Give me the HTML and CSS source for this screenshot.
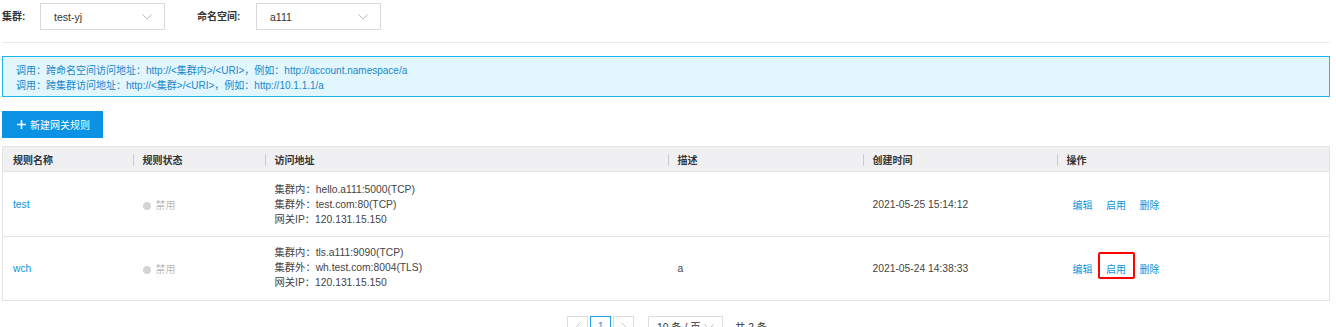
FILE: index.html
```html
<!DOCTYPE html>
<html lang="zh-CN">
<head>
<meta charset="UTF-8" />
<title>网关规则</title>
<link rel="stylesheet" href="styles.css">
</head>
<body>
<div class="page">

  <div class="filters">
    <span class="filter-label">集群:</span>
    <div class="select">
      <span>test-yj</span>
      <svg class="chev" width="10" height="6" viewBox="0 0 10 6"><path d="M0.5 0.5 L5 5 L9.5 0.5" fill="none" stroke="#bbb" stroke-width="1"/></svg>
    </div>
    <span class="filter-label ns-label">命名空间:</span>
    <div class="select">
      <span>a111</span>
      <svg class="chev" width="10" height="6" viewBox="0 0 10 6"><path d="M0.5 0.5 L5 5 L9.5 0.5" fill="none" stroke="#bbb" stroke-width="1"/></svg>
    </div>
  </div>

  <div class="notice">
    <p>调用：跨命名空间访问地址：http://&lt;集群内&gt;/&lt;URI&gt;，例如：http://account.namespace/a</p>
    <p>调用：跨集群访问地址：http://&lt;集群&gt;/&lt;URI&gt;，例如：http://10.1.1.1/a</p>
  </div>

  <button class="btn-add">
    <svg class="plus" width="9" height="9" viewBox="0 0 9 9"><path d="M4.5 0 V9 M0 4.5 H9" stroke="#fff" stroke-width="1.6"/></svg>
    新建网关规则
  </button>

  <table class="rules">
    <colgroup>
      <col style="width:130px">
      <col style="width:132px">
      <col style="width:403px">
      <col style="width:195px">
      <col style="width:194px">
      <col>
    </colgroup>
    <thead>
      <tr>
        <th>规则名称</th>
        <th><i class="sep"></i>规则状态</th>
        <th><i class="sep"></i>访问地址</th>
        <th><i class="sep"></i>描述</th>
        <th><i class="sep"></i>创建时间</th>
        <th><i class="sep"></i>操作</th>
      </tr>
    </thead>
    <tbody>
      <tr class="row-1">
        <td><a class="link">test</a></td>
        <td><span class="status"><i class="dot"></i>禁用</span></td>
        <td class="addr">集群内：hello.a111:5000(TCP)<br>集群外：test.com:80(TCP)<br>网关IP：120.131.15.150</td>
        <td></td>
        <td>2021-05-25 15:14:12</td>
        <td class="ops"><a class="link">编辑</a><a class="link">启用</a><a class="link">删除</a></td>
      </tr>
      <tr class="row-2">
        <td><a class="link">wch</a></td>
        <td><span class="status"><i class="dot"></i>禁用</span></td>
        <td class="addr">集群内：tls.a111:9090(TCP)<br>集群外：wh.test.com:8004(TLS)<br>网关IP：120.131.15.150</td>
        <td>a</td>
        <td>2021-05-24 14:38:33</td>
        <td class="ops"><a class="link">编辑</a><a class="link marked">启用<span class="mark"></span></a><a class="link">删除</a></td>
      </tr>
    </tbody>
  </table>

  <div class="pager">
    <span class="pg-btn">
      <svg width="6" height="10" viewBox="0 0 6 10"><path d="M5.5 0.5 L1 5 L5.5 9.5" fill="none" stroke="#ccc"/></svg>
    </span>
    <span class="pg-btn active">1</span>
    <span class="pg-btn">
      <svg width="6" height="10" viewBox="0 0 6 10"><path d="M0.5 0.5 L5 5 L0.5 9.5" fill="none" stroke="#ccc"/></svg>
    </span>
    <div class="pg-size">
      <span>10 条 / 页</span>
      <svg width="10" height="6" viewBox="0 0 10 6"><path d="M0.5 0.5 L5 5 L9.5 0.5" fill="none" stroke="#bbb"/></svg>
    </div>
    <span class="pg-total">共 2 条</span>
  </div>

</div>
</body>
</html>
```

FILE: styles.css
```css
body {
  margin: 0;
  font-family: "Liberation Sans", Arial, "Noto Sans CJK SC", sans-serif;
  font-size: 10.3px;
  color: #333;
  background: #fff;
}
.page {
  width: 1328px;
  margin-left: 2px;
}
.filters {
  display: flex;
  align-items: center;
  height: 31px;
  padding-bottom: 11px;
  border-bottom: 1px solid #e8e8e8;
}
.filter-label {
  font-weight: bold;
  font-size: 10px;
  width: 38px;
}
.ns-label {
  margin-left: 32px;
  width: 59px;
}
.select {
  box-sizing: border-box;
  width: 125px;
  height: 27px;
  margin-top: 2px;
  border: 1px solid #d9d9d9;
  display: flex;
  align-items: center;
  justify-content: space-between;
  padding: 0 12px 0 13px;
  font-size: 10.5px;
  color: #333;
}
.notice {
  margin-top: 13px;
  box-sizing: border-box;
  height: 41px;
  background: #e2f6fd;
  border: 1px solid #1fb3ec;
  padding: 6px 13px;
  color: #1a86cc;
}
.notice p {
  margin: 0;
  line-height: 15px;
  font-size: 10px;
}
.btn-add {
  margin-top: 14px;
  height: 27px;
  width: 101px;
  border: none;
  background: #0c92e4;
  color: #fff;
  font-family: inherit;
  font-size: 10px;
  padding: 0 0 0 2px;
  display: flex;
  align-items: center;
  justify-content: center;
}
.btn-add .plus {
  margin-right: 4px;
}
.rules {
  margin-top: 8px;
  width: 1328px;
  table-layout: fixed;
  border-collapse: collapse;
  border: 1px solid #e4e4e4;
}
.rules th {
  background: #f0f0f2;
  height: 24px;
  text-align: left;
  font-weight: bold;
  padding: 0 0 0 10px;
  color: #333;
  font-size: 10px;
}
.rules th .sep {
  display: inline-block;
  width: 1px;
  height: 12px;
  background: #ccc;
  vertical-align: -2px;
  margin: 0 9px 0 -10px;
}
.rules td {
  padding: 0 0 0 10px;
  border-top: 1px solid #e4e4e4;
  color: #444;
}
.rules .row-1 td { height: 63px; }
.rules .row-2 td { height: 61px; }
.rules td.addr {
  line-height: 15px;
  padding-top: 1px;
}
.rules .row-2 td.addr {
  padding-top: 0;
  padding-bottom: 2px;
}
.link {
  color: #0b95e0;
  cursor: pointer;
}
.status {
  color: #bbb;
  font-size: 10px;
}
.status .dot {
  display: inline-block;
  width: 8px;
  height: 8px;
  border-radius: 50%;
  background: #d4d4d4;
  margin-right: 5px;
  vertical-align: -1px;
}
.ops {
  padding-left: 16px !important;
  font-size: 10px;
}
.ops .link {
  margin-right: 13.5px;
}
.marked {
  position: relative;
}
.mark {
  position: absolute;
  box-sizing: border-box;
  left: -8px;
  top: -12px;
  width: 37px;
  height: 27px;
  border: 2px solid #f00;
  border-radius: 2px;
}
.pager {
  display: flex;
  align-items: center;
  margin: 15px 0 0 565px;
  white-space: nowrap;
}
.pg-btn {
  box-sizing: border-box;
  width: 21px;
  height: 21px;
  border: 1px solid #ddd;
  margin-right: 2px;
  display: flex;
  align-items: center;
  justify-content: center;
  color: #333;
}
.pg-btn.active {
  border-color: #1fa3ec;
  color: #0b95e0;
}
.pg-size {
  box-sizing: border-box;
  margin-left: 12px;
  width: 75px;
  height: 21px;
  border: 1px solid #ddd;
  display: flex;
  align-items: center;
  justify-content: space-between;
  padding: 0 8px;
}
.pg-total {
  margin-left: 12px;
}
```
